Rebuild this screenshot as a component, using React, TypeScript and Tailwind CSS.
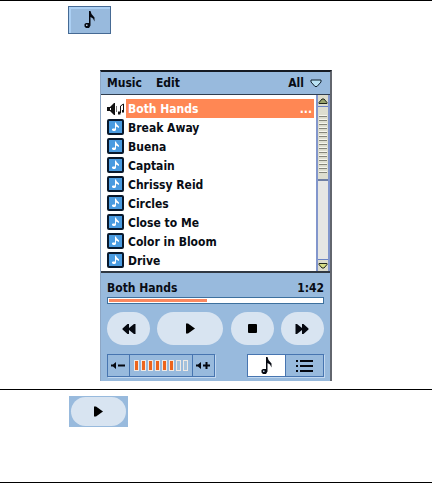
import { useState } from "react";
import clsx from "clsx";

const tracks = [
  "Both Hands",
  "Break Away",
  "Buena",
  "Captain",
  "Chrissy Reid",
  "Circles",
  "Close to Me",
  "Color in Bloom",
  "Drive",
];

const NoteIcon = () => (
  <svg width="12" height="20" viewBox="0 0 12 20" aria-hidden="true">
    <path d="M5 1h1.500l1 3 3 3.500v4L9 8.500 6.500 7v8.500L5 18H2l-1.500-1.500V14L2 13h3z" fill="#050810" />
    <path d="M2 14.500h1.500v1.500H2z" fill="#b9cfe6" />
  </svg>
);

const PlayIcon = () => (
  <svg width="11" height="11" viewBox="0 0 11 11" aria-hidden="true">
    <path d="M1 .5h2l7 5-7 5H1z" fill="#000" />
  </svg>
);

const SkipIcon = ({ back }: { back?: boolean }) => (
  <svg className={back ? "-scale-x-100" : ""} width="14" height="10" viewBox="0 0 14 10" aria-hidden="true">
    <path d="M.5 0h1.500L7 4V0h1.500l5 4.500v1L8.500 10H7V6L2 10H.5z" fill="#050810" />
  </svg>
);

const PlayingIcon = () => (
  <svg width="18" height="14" viewBox="0 0 18 14" aria-hidden="true">
    <path d="M0 5h3l4-4h1v12H7L3 9H0z" fill="#111" />
    <path d="M3 6h1v2H3z" fill="#fff" />
    <path d="M9.500 4v6" stroke="#777" />
    <path d="M13.500 11V4l3-2v8" fill="none" stroke="#111" />
    <path d="M11 9.500h2.500v3H11zM15 8h2v2.500h-2z" fill="#111" />
  </svg>
);

const TrackIcon = () => (
  <svg width="17" height="17" viewBox="0 0 17 17" aria-hidden="true">
    <rect width="17" height="16" rx="2" fill="#08182c" />
    <rect x="2" y="2" width="13" height="12" fill="#4a9be0" />
    <path d="M8 3.500h1l.5 1.500L12 7.500V9L9 7.500V11l-1 1H6l-1-1v-1l1-.5h2z" fill="#fff" />
  </svg>
);

const VolumeIcon = ({ up }: { up?: boolean }) => (
  <svg width="15" height="9" viewBox="0 0 15 9" aria-hidden="true">
    <path d="M0 3.500h2L5 1v7L2 5.500H0z" fill="#050810" />
    <path d={up ? "M7 3.500h2.500V1h2v2.500H14v2h-2.500V8h-2V5.500H7z" : "M7 3.500h7v2H7z"} fill="#050810" />
  </svg>
);

const ListIcon = () => (
  <svg width="17" height="12" viewBox="0 0 17 12" aria-hidden="true">
    <path d="M0 0h2v2H0zM4 0h13v2H4zM0 5h2v2H0zM4 5h13v2H4zM0 10h2v2H0zM4 10h13v2H4z" fill="#050810" />
  </svg>
);

const ScrollArrow = ({ down }: { down?: boolean }) => (
  <svg className={down ? "rotate-180" : ""} width="10" height="6" viewBox="0 0 10 6" aria-hidden="true">
    <path d="M1 5.500V4.500L4 1h2l3 3.500v1z" fill={down ? "#d6dd86" : "#9aa36c"} stroke="#20281c" />
  </svg>
);

const round = "flex h-[33px] items-center justify-center rounded-full bg-[#d8e4f1]";
const border = "border-[#4775b0]";

function ScrollBar() {
  return (
    <div className="flex w-3.5 shrink-0 flex-col border-x-2 border-[#8296cc] bg-[#e6e6e4]">
      <button aria-label="Scroll up" className="flex h-3 items-center justify-center border-b border-[#6c84c4] bg-[#dcdccc]">
        <ScrollArrow />
      </button>
      <div className="flex h-[74px] flex-col items-center gap-0.5 border-b-2 border-[#7080a4] bg-[#deded0] pt-2">
        {Array.from({ length: 15 }, (_, i) => (
          <span key={i} className="h-0.5 w-2 border-b border-[#85857a] bg-[#f6f6ee]" />
        ))}
      </div>
      <button aria-label="Scroll down" className="mt-auto flex h-3 items-center justify-center border-t border-[#6c84c4] bg-[#dcdccc]">
        <ScrollArrow down />
      </button>
    </div>
  );
}

function Player() {
  const [current, setCurrent] = useState(0);
  const [view, setView] = useState("song");
  const volume = 6;
  const progress = 46;

  return (
    <section className="w-[232px] border-t-2 border-r-2 border-l border-t-[#151a22] border-r-[#62666e] border-l-[#8da6c4] bg-[#98badd]">
      <header className="flex h-[23px] items-center gap-3.5 border-b border-[#303e50] pr-2 pl-1.5">
        <button>Music</button>
        <button>Edit</button>
        <button className="ml-auto flex items-center gap-1.5">
          All
          <svg width="12" height="9" viewBox="0 0 12 9" aria-hidden="true">
            <path d="M1 1h10v2L7 7.500H5L1 3z" fill="#b9e2f4" stroke="#10202c" />
          </svg>
        </button>
      </header>

      <div className="flex h-44 bg-white">
        <ul className="min-w-0 flex-1 pt-1 pr-0.5 pl-1.5">
          {tracks.map((track, i) => (
            <li key={track} className="flex h-[19px] items-center">
              <span className="flex w-[19px] shrink-0 items-center">
                {i === current ? <PlayingIcon /> : <TrackIcon />}
              </span>
              <button
                onClick={() => setCurrent(i)}
                className={clsx(
                  "flex h-full flex-1 items-center justify-between px-0.5",
                  i === current && "bg-[#ff8754] text-white"
                )}
              >
                {track}
                {i === current && <span>...</span>}
              </button>
            </li>
          ))}
        </ul>
        <ScrollBar />
      </div>

      <div className="border-t-2 border-[#303842] px-1.5 pt-1.5 pb-1">
        <div className="flex h-[18px] items-center justify-between">
          <span>{tracks[current]}</span>
          <span>1:42</span>
        </div>
        <div className="h-[7px] border border-[#3d709e] bg-white p-px">
          <div className="h-full bg-[#fa8860]" style={{ width: `${progress}%` }} />
        </div>

        <div className="mt-2 flex justify-between">
          <button aria-label="Previous" className={clsx(round, "w-[43px]")}>
            <SkipIcon back />
          </button>
          <button aria-label="Play" className={clsx(round, "w-[66px]")}>
            <PlayIcon />
          </button>
          <button aria-label="Stop" className={clsx(round, "w-[43px]")}>
            <span className="size-[9px] rounded-[1px] bg-black" />
          </button>
          <button aria-label="Next" className={clsx(round, "w-[43px]")}>
            <SkipIcon />
          </button>
        </div>

        <div className="mt-[9px] flex h-[23px] justify-between">
          <div className={clsx("flex border shadow-[1px_1px_0_#c2d8f0]", border)}>
            <button aria-label="Volume down" className={clsx("flex w-[22px] items-center justify-center border-r", border)}>
              <VolumeIcon />
            </button>
            <div className="flex w-[62px] items-center justify-center gap-0.5">
              {Array.from({ length: 8 }, (_, i) => (
                <span
                  key={i}
                  className={clsx("h-[11px] w-[5px] border border-[#efe9e4]", i < volume ? "bg-[#ed641c]" : "bg-[#a6c2dc]")}
                />
              ))}
            </div>
            <button aria-label="Volume up" className={clsx("flex w-[22px] items-center justify-center border-l", border)}>
              <VolumeIcon up />
            </button>
          </div>
          <div className={clsx("flex border shadow-[1px_1px_0_#c2d8f0]", border)}>
            <button
              aria-label="Song view"
              onClick={() => setView("song")}
              className={clsx("flex w-[37px] items-center justify-center", view === "song" && "bg-white")}
            >
              <NoteIcon />
            </button>
            <button
              aria-label="List view"
              onClick={() => setView("list")}
              className={clsx("flex w-[38px] items-center justify-center border-l", border, view === "list" && "bg-white")}
            >
              <ListIcon />
            </button>
          </div>
        </div>
      </div>
    </section>
  );
}

export default function App() {
  return (
    <main className="border-y border-black bg-white font-['DejaVu_Sans_Condensed','DejaVu_Sans',sans-serif] text-[12px] leading-4 font-bold text-[#080c14]">
      <div className="px-[68px] pt-[5px]">
        <button
          aria-label="Song view"
          className="flex h-7 w-[43px] items-center justify-center border border-[#466a94] bg-[#98badd] shadow-[inset_2px_2px_0_#acd0f4]"
        >
          <NoteIcon />
        </button>
      </div>
      <div className="flex justify-center pt-9 pb-2">
        <Player />
      </div>
      <div className="border-t border-black px-[69px] pt-1.5 pb-[55px]">
        <button aria-label="Play" className="flex h-[31px] w-[59px] bg-[#98badd] px-0.5 py-px">
          <span className="flex h-full flex-1 items-center justify-center rounded-full bg-[#d8e4f1]">
            <PlayIcon />
          </span>
        </button>
      </div>
    </main>
  );
}
